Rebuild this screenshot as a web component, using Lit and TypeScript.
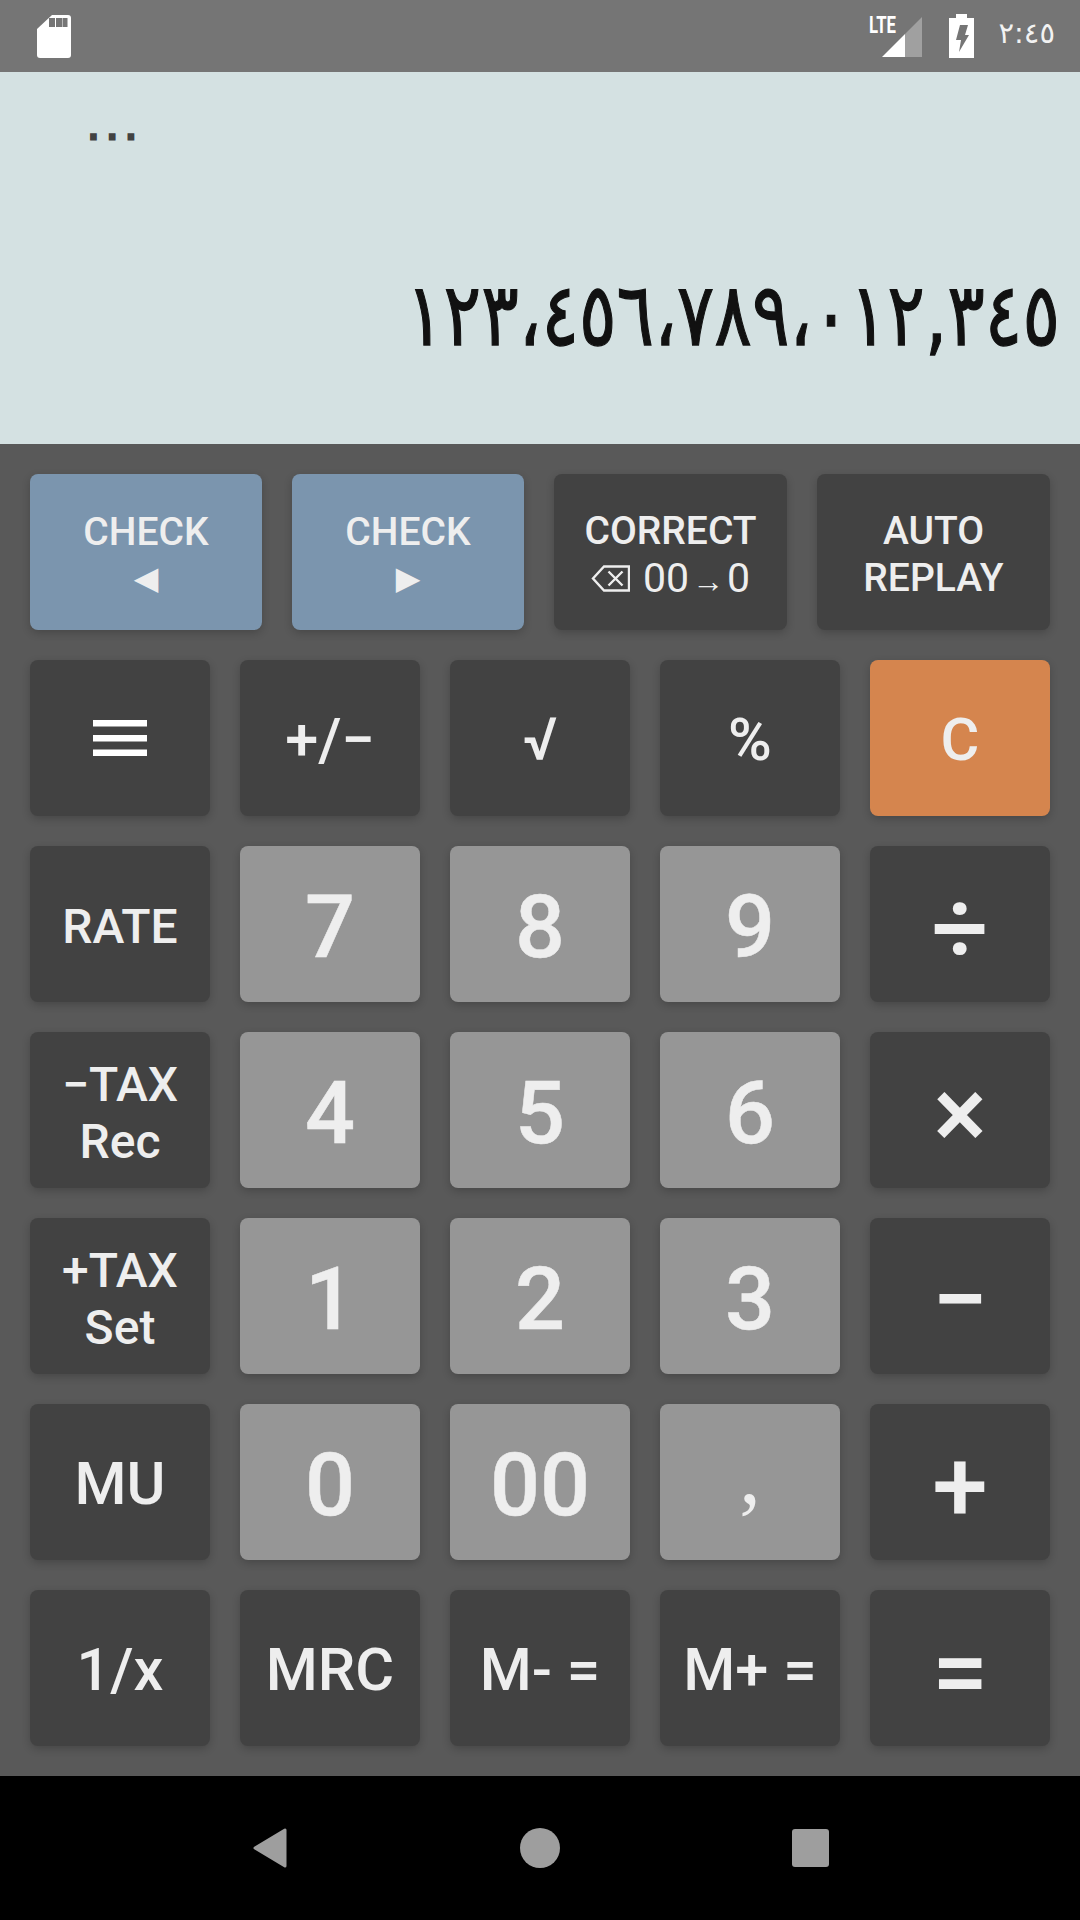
import { LitElement, html, css } from "lit";
import { customElement } from "lit/decorators.js";

type Key = { label?: string; lines?: string[]; kind?: string; size?: string; icon?: string; tri?: string };

const topRow: Key[] = [
  { lines: ["CHECK"], tri: "◀", kind: "blue" },
  { lines: ["CHECK"], tri: "▶", kind: "blue" },
  { lines: ["CORRECT"], icon: "correct" },
  { lines: ["AUTO", "REPLAY"] },
];

const grid: Key[] = [
  { icon: "menu" }, { label: "+/−", size: "m" }, { label: "√", size: "m" }, { label: "%", size: "m" }, { label: "C", size: "m", kind: "orange" },
  { label: "RATE", size: "s" }, { label: "7", size: "xl", kind: "num" }, { label: "8", size: "xl", kind: "num" }, { label: "9", size: "xl", kind: "num" }, { label: "÷", size: "op" },
  { lines: ["−TAX", "Rec"], size: "s" }, { label: "4", size: "xl", kind: "num" }, { label: "5", size: "xl", kind: "num" }, { label: "6", size: "xl", kind: "num" }, { label: "×", size: "op" },
  { lines: ["+TAX", "Set"], size: "s" }, { label: "1", size: "xl", kind: "num" }, { label: "2", size: "xl", kind: "num" }, { label: "3", size: "xl", kind: "num" }, { label: "−", size: "op" },
  { label: "MU", size: "m" }, { label: "0", size: "xl", kind: "num" }, { label: "00", size: "xl", kind: "num" }, { label: ",", size: "comma", kind: "num" }, { label: "+", size: "op" },
  { label: "1/x", size: "m" }, { label: "MRC", size: "m" }, { label: "M- =", size: "m" }, { label: "M+ =", size: "m" }, { label: "=", size: "op" },
];

@customElement("app-root")
export class AppRoot extends LitElement {
  static styles = css`
    :host { display: flex; flex-direction: column; width: 1080px; height: 1920px; overflow: hidden; font-family: Roboto, "Noto Sans", sans-serif; }
    .status { height: 72px; background: #757575; display: flex; align-items: center; padding: 0 25px 0 37px; color: #fff; flex: none; }
    .spacer { flex: 1; }
    .battery { margin-left: 27px; }
    .time { font-family: "DejaVu Sans", sans-serif; font-size: 29px; margin: 0 0 6px 25px; color: #f2f2f2; }
    .display { height: 372px; flex: none; background: #d4e1e2; display: flex; flex-direction: column; font-family: "DejaVu Sans", sans-serif; color: #111; }
    .dots { font-size: 35px; padding: 50px 0 0 84px; color: #424242; line-height: 26px; -webkit-text-stroke: 3px #424242; }
    .value { margin-top: 122px; padding-right: 20px; text-align: right; font-size: 70px; letter-spacing: -0.42px; line-height: 90px; white-space: nowrap; transform: scaleY(1.25); -webkit-text-stroke: 1px #111; }
    .pad { flex: none; height: 1332px; box-sizing: border-box; background: #595959; padding: 30px; display: flex; flex-direction: column; gap: 30px; }
    .row4 { display: grid; grid-template-columns: 232px 232px 233px 233px; gap: 30px; }
    .row5 { display: grid; grid-template-columns: repeat(5, 1fr); grid-auto-rows: 156px; gap: 30px; }
    .key { height: 156px; border-radius: 8px; background: #424242; color: #eee; display: flex; flex-direction: column; align-items: center; justify-content: center; font-weight: 500; box-shadow: 0 3px 8px rgba(0,0,0,.2); font-size: 39px; line-height: 47px; text-align: center; white-space: nowrap; }
    .txt { margin-top: 5px; }
    .blue { background: #7b95ae; }
    .orange { background: #d5854e; }
    .num { background: #969696; }
    .s { font-size: 48px; line-height: 57px; }
    .m { font-size: 59.5px; }
    .xl { font-size: 88px; -webkit-text-stroke: 0.5px #eee; }
    .op { font-size: 100px; line-height: 100px; font-weight: 500; }
    .op .txt { margin-top: 8px; }
    .comma { font-family: "Liberation Serif", serif; font-size: 86px; line-height: 86px; font-weight: 400; }
    .comma .txt { margin-top: -16px; }
    .tri { font-family: "DejaVu Sans", sans-serif; font-size: 32px; line-height: 44px; }
    .sub { display: flex; align-items: center; font-weight: 400; font-size: 41px; height: 47px; }
    .zeros { margin-left: 13px; }
    .arrow { font-family: "Liberation Sans", sans-serif; font-size: 32px; line-height: 24px; margin: 6px 3px 0 3px; }
    .nav { flex: 1; background: #000; display: flex; align-items: center; justify-content: center; }
    .navitem { width: 270px; display: flex; justify-content: center; }
    svg { display: block; }
  `;

  private renderIcon(name: string) {
    if (name === "menu") {
      return html`<svg width="54" height="36" viewBox="0 0 54 36" fill="#fff"><rect width="54" height="6.5" y="0"/><rect width="54" height="6.5" y="15"/><rect width="54" height="6.5" y="29.5"/></svg>`;
    }
    return html`<div class="sub"><svg width="39" height="27" viewBox="0 0 39 27" fill="none" stroke="#eee" stroke-width="2.4"><path d="M38 1.500H13L2 13.500l11 12h25z"/><path d="M17.500 6.500l14 14M31.500 6.500l-14 14"/></svg><span class="zeros">00</span><span class="arrow">→</span><span>0</span></div>`;
  }

  private renderKey(k: Key) {
    return html`<div class="key ${k.kind ?? ""} ${k.size ?? ""}">
      ${k.label || k.lines
        ? html`<div class="txt">${k.label ?? ""}${(k.lines ?? []).map((l) => html`<div>${l}</div>`)}</div>`
        : ""}
      ${k.tri ? html`<div class="tri">${k.tri}</div>` : ""}
      ${k.icon ? this.renderIcon(k.icon) : ""}
    </div>`;
  }

  render() {
    return html`
      <div class="status">
        <svg width="34" height="43" viewBox="0 0 34 43"><path fill="#fff" d="M15 0h16a3 3 0 0 1 3 3v37a3 3 0 0 1-3 3H3a3 3 0 0 1-3-3V14z"/><path fill="#757575" d="M12 3h6v9h-6zM19 3h6v9h-6zM25.500 3h5v9h-5z"/></svg>
        <div class="spacer"></div>
        <svg width="53" height="52" viewBox="0 0 53 52"><text x="0" y="23" fill="#fff" font-family="Roboto" font-size="24" font-weight="700" textLength="27" lengthAdjust="spacingAndGlyphs">LTE</text><path fill="#fff" d="M13 47L36 24v23z"/><path fill="#a0a0a0" d="M36 24L53 7v40H36z"/></svg>
        <svg class="battery" width="25" height="44" viewBox="0 0 25 44"><path fill="#fff" d="M7 0h11v4h7v40H0V4h7z"/><path fill="#757575" d="M11 11h8l-3 10h4L10 38l2-12H7z"/></svg>
        <span class="time">٢:٤٥</span>
      </div>
      <div class="display">
        <div class="dots">٠٠٠</div>
        <div class="value">١٢٣،٤٥٦،٧٨٩،٠١٢,٣٤٥</div>
      </div>
      <div class="pad">
        <div class="row4">${topRow.map((k) => this.renderKey(k))}</div>
        <div class="row5">${grid.map((k) => this.renderKey(k))}</div>
      </div>
      <div class="nav">
        <div class="navitem"><svg width="34" height="40" viewBox="0 0 34 40"><path fill="#9e9e9e" stroke="#9e9e9e" stroke-width="3" stroke-linejoin="round" d="M32 2v36L2 20z"/></svg></div>
        <div class="navitem"><svg width="40" height="40" viewBox="0 0 40 40"><circle cx="20" cy="20" r="20" fill="#9e9e9e"/></svg></div>
        <div class="navitem"><svg width="37" height="38" viewBox="0 0 37 38"><rect width="37" height="38" rx="3" fill="#9e9e9e"/></svg></div>
      </div>
    `;
  }
}
